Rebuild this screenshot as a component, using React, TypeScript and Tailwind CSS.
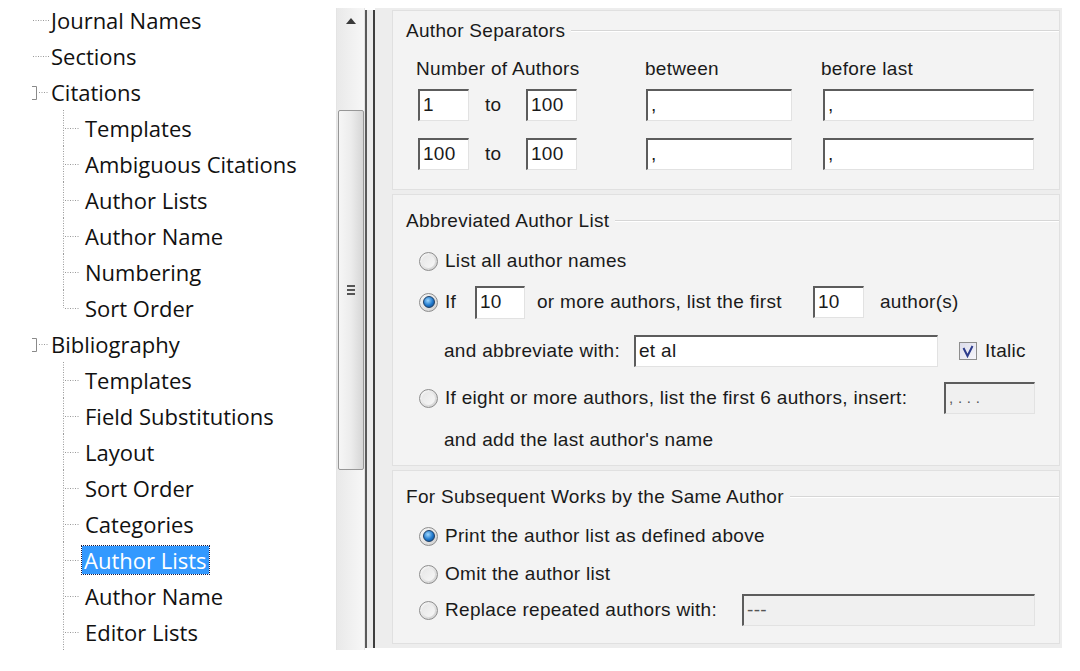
import React from 'react';

type TreeItem = { label: string; level: 0 | 1; expander?: boolean; last?: boolean; selected?: boolean };

const TREE: TreeItem[] = [
  { label: 'Journal Names', level: 0 },
  { label: 'Sections', level: 0 },
  { label: 'Citations', level: 0, expander: true },
  { label: 'Templates', level: 1 },
  { label: 'Ambiguous Citations', level: 1 },
  { label: 'Author Lists', level: 1 },
  { label: 'Author Name', level: 1 },
  { label: 'Numbering', level: 1 },
  { label: 'Sort Order', level: 1, last: true },
  { label: 'Bibliography', level: 0, expander: true },
  { label: 'Templates', level: 1 },
  { label: 'Field Substitutions', level: 1 },
  { label: 'Layout', level: 1 },
  { label: 'Sort Order', level: 1 },
  { label: 'Categories', level: 1 },
  { label: 'Author Lists', level: 1, selected: true },
  { label: 'Author Name', level: 1 },
  { label: 'Editor Lists', level: 1 },
];

const DOT = '#9a9a9a';

const TreeRow: React.FC<{ item: TreeItem }> = ({ item }) => {
  if (item.level === 0) {
    return (
      <div className="h-9 flex items-center">
        <svg width="51" height="36" className="shrink-0">
          {item.expander && (
            <path d="M32 12.5 H36.5 V25.5 H32" fill="none" stroke="#8a8a8a" strokeWidth="1" />
          )}
          <line x1={item.expander ? 39 : 33} y1="18.5" x2="49" y2="18.5" stroke={DOT} strokeDasharray="1 1.5" />
        </svg>
        <span className="text-[22px] text-[#111]">{item.label}</span>
      </div>
    );
  }
  return (
    <div className="h-9 flex items-center">
      <svg width="82" height="36" className="shrink-0">
        <line x1="63.5" y1="0" x2="63.5" y2={item.last ? 18 : 36} stroke={DOT} strokeDasharray="1 1.5" />
        <line x1="65" y1="18.5" x2="80" y2="18.5" stroke={DOT} strokeDasharray="1 1.5" />
      </svg>
      {item.selected ? (
        <span className="h-[28px] px-[2px] flex items-center text-[22px] text-white bg-[#3399ff] outline outline-1 outline-dotted outline-[#1a1a40]">
          {item.label}
        </span>
      ) : (
        <span className="px-[3px] text-[22px] text-[#111]">{item.label}</span>
      )}
    </div>
  );
};

const Field: React.FC<{ className: string; value: string; disabled?: boolean }> = ({ className, value, disabled }) => (
  <div
    className={`${className} shrink-0 flex items-center pl-[3px] border-t-2 border-l-2 border-t-[#5c5c5c] border-l-[#5c5c5c] border-r border-b border-r-[#e2e2e2] border-b-[#e2e2e2] ${
      disabled ? 'bg-[#f0f0f0] text-[#555]' : 'bg-white'
    }`}
  >
    {value}
  </div>
);

const Radio: React.FC<{ checked?: boolean }> = ({ checked }) => (
  <span className="w-[19px] h-[19px] shrink-0 rounded-full border border-[#8d8d8d] bg-gradient-to-br from-[#fafafa] to-[#cfcfcf] flex items-center justify-center">
    {checked ? (
      <span className="w-[12px] h-[12px] rounded-full border border-[#1d3f66] bg-[radial-gradient(circle_at_40%_35%,#9fd8ff,#1f78cc_55%,#0f3f78)]" />
    ) : (
      <span className="w-[13px] h-[13px] rounded-full bg-gradient-to-br from-[#e6e6e6] to-[#f7f7f7]" />
    )}
  </span>
);

const Checkbox: React.FC = () => (
  <span className="w-[18px] h-[18px] shrink-0 border border-[#8d8d8d] bg-gradient-to-br from-[#dcdcea] to-[#f6f6fa] flex items-center justify-center">
    <svg width="14" height="14" viewBox="0 0 14 14">
      <path d="M2.5 4 L6.5 12 L11.5 2" fill="none" stroke="#2c3b8c" strokeWidth="2" />
    </svg>
  </span>
);

const GroupTitle: React.FC<{ title: string; className: string }> = ({ title, className }) => (
  <div className={`${className} flex items-center pl-[13px]`}>
    <span className="pr-[6px]">{title}</span>
    <div className="flex-1 border-t border-t-[#d6d6d6] border-b border-b-white" />
  </div>
);

export default function App() {
  return (
    <div className="w-[1080px] h-[671px] bg-white flex overflow-hidden" style={{ fontFamily: '"Open Sans", sans-serif' }}>
      {/* tree */}
      <div className="w-[336px] pt-[2px] shrink-0">
        {TREE.map((item, i) => (
          <TreeRow key={i} item={item} />
        ))}
      </div>

      {/* scrollbar */}
      <div className="w-[29px] h-[642px] mt-[8px] shrink-0 flex flex-col items-center bg-gradient-to-r from-[#e9e9e9] to-[#f7f7f7] border-x border-[#e4e4e4]">
        <div className="h-[26px] flex items-center justify-center">
          <svg width="10" height="6" viewBox="0 0 10 6">
            <path d="M0 6 L5 0 L10 6 Z" fill="#3a3a3a" />
          </svg>
        </div>
        <div className="h-[76px]" />
        <div className="w-[26px] h-[360px] rounded-[2px] border border-[#979797] bg-gradient-to-r from-[#f6f6f6] via-[#ececec] to-[#d6d6d6] flex items-center justify-center">
          <div className="flex flex-col gap-[2px]">
            <div className="w-[8px] h-[2px] bg-[#555]" />
            <div className="w-[8px] h-[2px] bg-[#555]" />
            <div className="w-[8px] h-[2px] bg-[#555]" />
          </div>
        </div>
      </div>

      {/* splitter */}
      <div className="w-[10px] h-[638px] mt-[10px] shrink-0 flex">
        <div className="w-[2px] bg-[#5a5a5a]" />
        <div className="w-[6px] bg-[#ececec]" />
        <div className="w-[2px] bg-[#3e3e3e]" />
      </div>

      {/* right panel */}
      <div
        className="w-[687px] h-[640px] mt-[8px] shrink-0 bg-[#ededed] pl-[17px] pr-[2px] pt-[2px] flex flex-col gap-[4px] text-[19px] tracking-[0.3px] text-[#1a1a1a]"
        style={{ fontFamily: '"Liberation Sans", Arial, sans-serif' }}
      >
        {/* Author Separators */}
        <div className="h-[180px] bg-[#f3f3f3] border border-[#e0e0e0] flex flex-col">
          <GroupTitle title="Author Separators" className="h-[40px]" />
          <div className="h-[36px] flex items-center pl-[23px]">
            <span className="w-[229px]">Number of Authors</span>
            <span className="w-[176px]">between</span>
            <span>before last</span>
          </div>
          {[
            ['1', '100'],
            ['100', '100'],
          ].map(([a, b], i) => (
            <div key={i} className={`${i === 0 ? 'h-[36px]' : 'h-[62px]'} flex items-center pl-[25px]`}>
              <Field className="w-[51px] h-[32px]" value={a} />
              <span className="w-[57px] pl-[16px]">to</span>
              <Field className="w-[51px] h-[32px]" value={b} />
              <Field className="w-[146px] h-[32px] ml-[69px]" value="," />
              <Field className="w-[211px] h-[32px] ml-[31px]" value="," />
            </div>
          ))}
        </div>

        {/* Abbreviated Author List */}
        <div className="h-[272px] bg-[#f3f3f3] border border-[#e0e0e0] flex flex-col pt-[6px]">
          <GroupTitle title="Abbreviated Author List" className="h-[40px]" />
          <div className="h-[40px] flex items-center pl-[26px] gap-[7px]">
            <Radio />
            <span>List all author names</span>
          </div>
          <div className="h-[42px] flex items-center pl-[26px]">
            <Radio checked />
            <span className="ml-[7px] w-[30px]">If</span>
            <Field className="w-[50px] h-[33px]" value="10" />
            <span className="ml-[12px] w-[276px]">or more authors, list the first</span>
            <Field className="w-[51px] h-[32px]" value="10" />
            <span className="ml-[16px]">author(s)</span>
          </div>
          <div className="h-[56px] flex items-center pl-[51px]">
            <span className="w-[190px]">and abbreviate with:</span>
            <Field className="w-[304px] h-[32px]" value="et al" />
            <span className="ml-[21px] mr-[8px]">
              <Checkbox />
            </span>
            <span>Italic</span>
          </div>
          <div className="h-[38px] flex items-center pl-[26px]">
            <Radio />
            <span className="ml-[7px] w-[499px] whitespace-nowrap">If eight or more authors, list the first 6 authors, insert:</span>
            <Field className="w-[91px] h-[32px] text-[15px]" value=", . . ." disabled />
          </div>
          <div className="h-[46px] flex items-center pl-[51px]">
            <span>and add the last author's name</span>
          </div>
        </div>

        {/* For Subsequent Works */}
        <div className="h-[174px] bg-[#f3f3f3] border border-[#e0e0e0] flex flex-col pt-[6px]">
          <GroupTitle title="For Subsequent Works by the Same Author" className="h-[40px]" />
          <div className="h-[38px] flex items-center pl-[26px] gap-[7px]">
            <Radio checked />
            <span>Print the author list as defined above</span>
          </div>
          <div className="h-[38px] flex items-center pl-[26px] gap-[7px]">
            <Radio />
            <span>Omit the author list</span>
          </div>
          <div className="h-[34px] flex items-center pl-[26px]">
            <Radio />
            <span className="ml-[7px] w-[297px]">Replace repeated authors with:</span>
            <Field className="w-[293px] h-[32px]" value="---" disabled />
          </div>
        </div>
      </div>
    </div>
  );
}
